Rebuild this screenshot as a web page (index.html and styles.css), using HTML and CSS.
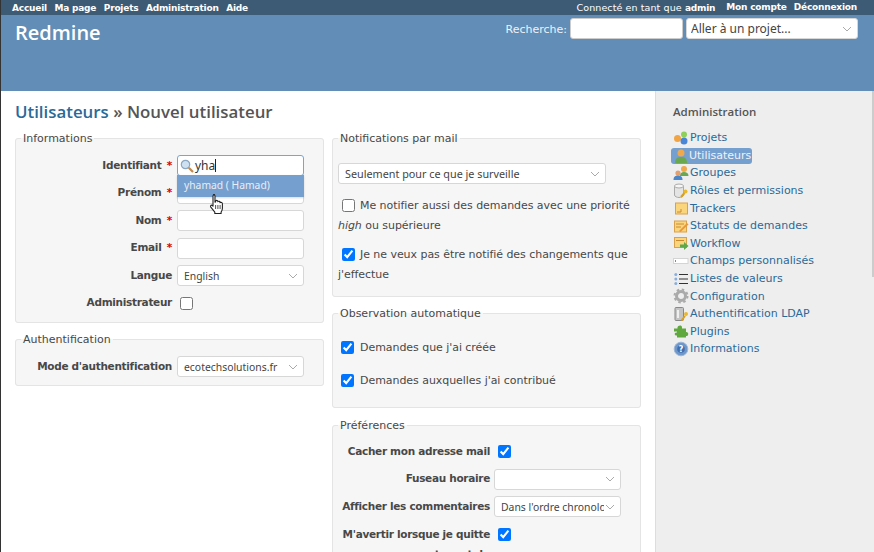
FILE: index.html
```html
<!DOCTYPE html>
<html lang="fr">
<head>
<meta charset="utf-8">
<title>Nouvel utilisateur - Redmine</title>
<link rel="stylesheet" href="styles.css">
</head>
<body>
<div class="page">
  <nav class="top-menu">
    <ul class="top-links">
      <li><a href="#">Accueil</a></li>
      <li><a href="#">Ma page</a></li>
      <li><a href="#">Projets</a></li>
      <li><a href="#">Administration</a></li>
      <li><a href="#">Aide</a></li>
    </ul>
    <div class="account">
      <span class="logged">Connecté en tant que <b>admin</b></span>
      <a href="#">Mon compte</a>
      <a href="#">Déconnexion</a>
    </div>
  </nav>
  <header class="header">
    <h1 class="brand">Redmine</h1>
    <div class="quick-search">
      <label class="search-label">Recherche:</label>
      <input class="search-input" type="text">
      <select class="field jump"><option>Aller à un projet...</option></select>
    </div>
  </header>
  <div class="body-row">
    <main class="content">
      <h2 class="title"><a href="#">Utilisateurs</a> » Nouvel utilisateur</h2>
      <div class="splitcontent">
        <div class="col">
          <fieldset class="box info-box">
            <legend>Informations</legend>
            <div class="row"><label>Identifiant <em>*</em></label>
              <div class="ac-wrap">
                <div class="ac-input">
                  <svg class="lens" viewBox="0 0 14 14" width="14" height="14"><circle cx="5.500" cy="5.500" r="4.200" fill="#cfe0f0" stroke="#8aa8c4" stroke-width="1.200"/><path d="M8.800 8.800 13 13" stroke="#c08a50" stroke-width="2.200"/></svg>
                  <span class="ac-text">yha</span><span class="caret"></span>
                </div>
                <ul class="ac-menu"><li>yhamad ( Hamad)</li></ul>
                <svg class="hand" viewBox="0 0 16 22" width="17" height="22"><path d="M5 1.600c.9 0 1.500.6 1.500 1.500v6l.6-.1V7.700c1.200-.7 2.200-.3 2.300.9.900-.6 2.100-.3 2.200 1 1-.5 2.300-.1 2.300 1.200v4.500c0 1.800-.6 2.700-1.300 3.800v1.400H6.300v-1.400c-1-1.300-2.500-3.200-4-5-.8-1.100.3-2.500 1.500-1.700l-.1.1.8.700V3.100c0-.9.600-1.500 1.500-1.500z" fill="#fff" stroke="#222" stroke-width="1.100" stroke-linejoin="round"/><path d="M7.100 12v4M9.400 12v4M11.600 12v4" stroke="#222" stroke-width=".8"/></svg>
              </div>
            </div>
            <div class="row"><label>Prénom <em>*</em></label><input class="field" type="text"></div>
            <div class="row"><label>Nom <em>*</em></label><input class="field" type="text"></div>
            <div class="row"><label>Email <em>*</em></label><input class="field" type="text"></div>
            <div class="row"><label>Langue</label><select class="field"><option>English</option></select></div>
            <div class="row"><label>Administrateur</label><input class="check" type="checkbox"></div>
          </fieldset>
          <fieldset class="box auth-box">
            <legend>Authentification</legend>
            <div class="row"><label>Mode d'authentification</label><select class="field"><option>ecotechsolutions.fr</option></select></div>
          </fieldset>
        </div>
        <div class="col">
          <fieldset class="box notif-box">
            <legend>Notifications par mail</legend>
            <select class="field notif-select"><option>Seulement pour ce que je surveille</option></select>
            <p class="para"><input class="check inline" type="checkbox">Me notifier aussi des demandes avec une priorité <i>high</i> ou supérieure</p>
            <p class="para"><input class="check inline" type="checkbox" checked>Je ne veux pas être notifié des changements que j'effectue</p>
          </fieldset>
          <fieldset class="box watch-box">
            <legend>Observation automatique</legend>
            <p class="watch"><input class="check inline" type="checkbox" checked>Demandes que j'ai créée</p>
            <p class="watch"><input class="check inline" type="checkbox" checked>Demandes auxquelles j'ai contribué</p>
          </fieldset>
          <fieldset class="box pref-box">
            <legend>Préférences</legend>
            <div class="prow"><label>Cacher mon adresse mail</label><input class="check" type="checkbox" checked></div>
            <div class="prow"><label>Fuseau horaire</label><select class="field short"><option></option></select></div>
            <div class="prow"><label>Afficher les commentaires</label><select class="field short"><option>Dans l'ordre chronologique</option></select></div>
            <div class="prow wrap"><label>M'avertir lorsque je quitte une page contenant du texte non sauvegardé</label><input class="check" type="checkbox" checked></div>
          </fieldset>
        </div>
      </div>
    </main>
    <aside class="sidebar">
      <h3 class="side-title">Administration</h3>
      <ul class="side-menu">
        <li><svg class="ico" viewBox="0 0 16 16"><circle cx="4.500" cy="8.500" r="3.500" fill="#f2a444"/><circle cx="11" cy="4.500" r="3" fill="#8fd05a"/><circle cx="11" cy="11" r="3.500" fill="#4a86d8"/></svg><a href="#">Projets</a></li>
        <li class="selected"><svg class="ico" viewBox="0 0 16 16"><circle cx="8" cy="5" r="3.500" fill="#f0a84c"/><path d="M2 15c0-5 2.500-6 6-6s6 1 6 6z" fill="#6aa84f"/></svg><a href="#">Utilisateurs</a></li>
        <li><svg class="ico" viewBox="0 0 16 16"><circle cx="11" cy="4" r="3" fill="#f0a84c"/><path d="M7 11c0-3 1.500-4 4-4s4.500 1 4.500 4z" fill="#6aa84f"/><circle cx="5" cy="8" r="2.600" fill="#e2a070"/><path d="M.5 15c0-3.500 2-4.500 4.500-4.500s4.500 1 4.500 4.500z" fill="#4a86c8"/></svg><a href="#">Groupes</a></li>
        <li><svg class="ico" viewBox="0 0 16 16"><path d="M1.500 3v9c0 1.500 2.500 2.500 4.500 2.500s4.500-1 4.500-2.500V3z" fill="#e4e4e4" stroke="#aaa"/><ellipse cx="6" cy="3" rx="4.500" ry="2" fill="#f6f6f6" stroke="#aaa"/><circle cx="12.500" cy="8.500" r="2" fill="#e8b830"/><path d="m11.500 10-3.500 4" stroke="#d8a020" stroke-width="2"/></svg><a href="#">Rôles et permissions</a></li>
        <li><svg class="ico" viewBox="0 0 16 16"><rect x="2.500" y="3" width="12" height="11" fill="#fbd57c" stroke="#d9a24a"/><path d="M4 12h4V9" stroke="#c98a30" fill="none"/></svg><a href="#">Trackers</a></li>
        <li><svg class="ico" viewBox="0 0 16 16"><rect x="1.500" y="3" width="12" height="11" fill="#fbd57c" stroke="#d9a24a"/><path d="M3 6h8M3 9h5" stroke="#c98a30"/><path d="m6 13 8-8 1.500 1.500-8 7.500z" fill="#e8983a"/></svg><a href="#">Statuts de demandes</a></li>
        <li><svg class="ico" viewBox="0 0 16 16"><rect x="1.500" y="2.500" width="12" height="10" fill="#fbd57c" stroke="#d9a24a"/><path d="M3 5.500h8" stroke="#c98a30"/><path d="M7 9.500h4V7l4.500 4-4.500 4v-2.500H7z" fill="#5da84a"/></svg><a href="#">Workflow</a></li>
        <li><svg class="ico" viewBox="0 0 16 16"><rect x=".5" y="5.500" width="14.500" height="5" fill="#fff" stroke="#d4d4d4"/><path d="M2.500 7v2" stroke="#888"/></svg><a href="#">Champs personnalisés</a></li>
        <li><svg class="ico" viewBox="0 0 16 16"><path d="M6 3.500h9M6 8h9M6 12.500h9" stroke="#333" stroke-width="1.200"/><circle cx="2.800" cy="3.500" r="1.500" fill="#88aee0"/><circle cx="2.800" cy="8" r="1.500" fill="#88aee0"/><circle cx="2.800" cy="12.500" r="1.500" fill="#88aee0"/></svg><a href="#">Listes de valeurs</a></li>
        <li><svg class="ico" viewBox="0 0 16 16"><circle cx="8" cy="8" r="4.500" fill="none" stroke="#aaa" stroke-width="3"/><circle cx="8" cy="8" r="6.500" fill="none" stroke="#aaa" stroke-width="2" stroke-dasharray="2.500 2.600"/></svg><a href="#">Configuration</a></li>
        <li><svg class="ico" viewBox="0 0 16 16"><rect x="2" y="1.500" width="8.500" height="13" rx="1" fill="#c4c4c4" stroke="#888"/><rect x="4" y="4" width="2" height="8" fill="#efefef"/><circle cx="13" cy="8" r="2" fill="#e8b830"/><path d="m12 10-3.500 4.500" stroke="#d8a020" stroke-width="2"/></svg><a href="#">Authentification LDAP</a></li>
        <li><svg class="ico" viewBox="0 0 16 16"><path d="M1 5.500h3.500c-.8-3 4.500-4.500 4.500-1v1h4v3.500c3-.5 3 4.500 0 4v1.500H4v-2C1 13 1 9 4 9.500v-1H1z" fill="#5fa83e"/></svg><a href="#">Plugins</a></li>
        <li><svg class="ico" viewBox="0 0 16 16"><circle cx="8" cy="8" r="6.800" fill="#6f97c9" stroke="#9bb6d8"/><circle cx="8" cy="8" r="3.800" fill="#3f6fb0"/><text class="info-mark" x="8" y="11" text-anchor="middle">?</text></svg><a href="#">Informations</a></li>
      </ul>
      <div class="scroll-thumb"></div>
    </aside>
  </div>
</div>
</body>
</html>
```
FILE: styles.css
```css
* { box-sizing: border-box; }
html, body { margin: 0; padding: 0; height: 100%; overflow: hidden; }
body { font-family: "DejaVu Sans", Verdana, sans-serif; font-size: 11px; color: #484848; background: #fff; border-left: 1px solid #333; }
.page { display: flex; flex-direction: column; height: 552px; }
ul { list-style: none; margin: 0; padding: 0; }
a { color: #169; text-decoration: none; }

.top-menu { flex: none; height: 15px; background: #3e5b76; color: #fff; display: flex; justify-content: space-between; align-items: center; font-size: 9.500px; padding: 0 17px 0 11px; }
.logged { margin-right: 4px; letter-spacing: .1px; }
.top-menu a, .top-menu b { color: #fff; font-weight: bold; font-size: 9px; letter-spacing: -.2px; }
.top-links { display: flex; gap: 7.500px; }
.account { display: flex; gap: 7px; }

.header { flex: none; height: 76px; background: #628db6; color: #f8f8f8; display: flex; justify-content: space-between; padding: 3px 16px 0 14px; }
.brand { margin: 1px 0 0; font: 600 20px/28px "Open Sans", sans-serif; color: #fff; }
.quick-search { display: flex; align-items: flex-start; height: 22px; }
.search-label { line-height: 23px; font-size: 11px; margin-right: 3px; color: #eef2f7; }
.search-input { width: 113px; height: 21px; border: 1px solid #ccc; border-radius: 3px; background: #fff; margin-right: 3px; }

.field { width: 127px; height: 21px; border: 1px solid #d7d7d7; border-radius: 3px; background: #fff; font: 10.400px "Noto Sans", sans-serif; color: #444; padding: 0 6px; margin: 0; }
select.field { appearance: none; -webkit-appearance: none; padding-right: 16px; background: #fff url("data:image/svg+xml,%3Csvg xmlns='http://www.w3.org/2000/svg' width='10' height='6'%3E%3Cpath d='M1 1l4 4 4-4' fill='none' stroke='%23aaa'/%3E%3C/svg%3E") no-repeat right 5px center; }
.jump { width: 172px; height: 21px; font-size: 12px !important; padding-left: 4px !important; }

.body-row { flex: 1; display: flex; min-height: 0; overflow: hidden; }
.content { width: 654px; flex: none; padding: 0 14px; }
.title { margin: 9px 0 7px; font: 600 16.850px/24px "Open Sans", sans-serif; color: #555; }
.title a { color: #2a6a98; }
.splitcontent { display: flex; gap: 8px; align-items: flex-start; }
.col { width: 309px; flex: none; }

.box { margin: 0 0 9px; padding: 0 8px; border: 1px solid #e4e4e4; border-radius: 3px; background: #f6f6f6; min-width: 0; }
.box legend { padding: 1px 2px 0; margin-left: -3px; font-size: 11px; line-height: 14px; color: #484848; }
.info-box { height: 192px; padding-top: 9px; }
.auth-box { height: 54px; padding-top: 9px; }
.notif-box { height: 166px; padding: 17px 5px 0; }
.notif-box legend { margin-left: 0; }
.watch-box { height: 102px; padding: 0 8px; margin-bottom: 10px; }
.pref-box { height: 200px; padding-top: 8px; }

.row, .prow { display: flex; align-items: center; height: 21px; margin-bottom: 6.600px; }
.row label, .prow label { text-align: right; font-weight: bold; flex: none; font-size: 10.500px; letter-spacing: -.3px; padding-bottom: 2px; }
.row label { width: 148px; margin-right: 5px; }
.row label em { color: #d00; font-style: normal; margin-left: 2px; }
.check { width: 13px; height: 13px; margin: 0; flex: none; }
.row .check { margin-left: 3px; }

.ac-wrap { position: relative; width: 127px; height: 21px; }
.ac-input { height: 21px; border: 1px solid #7aa5d0; border-radius: 3px; background: #fff; display: flex; align-items: center; padding-left: 2px; font: 12px "Noto Sans", sans-serif; color: #333; }
.lens { margin-right: 1px; }
.caret { width: 1px; height: 13px; background: #222; }
.ac-menu { position: absolute; top: 20px; left: 0; width: 127px; background: #759fcf; color: #e8eef6; height: 22px; padding-left: 7px; font: 10.300px/21px "Noto Sans", sans-serif; box-shadow: 0 1px 2px rgba(0,0,0,.15); z-index: 2; }
.hand { position: absolute; top: 38px; left: 31px; z-index: 3; }

.notif-select { width: 268px; display: block; font-size: 10.800px; }
.para { margin: 10px 0 0; line-height: 19.500px; letter-spacing: -.05px; }
.notif-select + .para { margin-top: 12px; }
.check.inline { margin: 0 5px 0 4px; vertical-align: -3px; }
.watch { margin: 0; line-height: 20px; letter-spacing: -.05px; }
.watch-box .check.inline { margin-left: 0; margin-right: 6px; }
.watch:first-of-type { margin-top: 17px; }
.watch + .watch { margin-top: 13px; }

.prow label { width: 153px; margin-left: -4px; margin-right: 4px; }
.prow .check { margin-left: 4px; }
.prow.wrap { align-items: flex-start; height: auto; }
.prow.wrap label { line-height: 20px; margin-top: 0; }
.prow.wrap .check { margin-top: 4px; }
.field.short { width: 127px; }

.sidebar { flex: 1; position: relative; background: #eee; border-left: 1px solid #ddd; padding: 13px 0 0 17px; }
.side-title { margin: 0 0 9px; font: 600 11.500px/16px "Open Sans", sans-serif; color: #555; }
.side-menu li { display: flex; align-items: center; height: 17.600px; }
.side-menu a { color: #2a6a98; font-size: 11px; padding-left: 1px; }
.ico { width: 16px; height: 16px; flex: none; }
.selected { width: 81px; height: 16px !important; background: #759fcf; border-radius: 3px; margin: 1px 0 .600px -2px; padding-left: 2px; }
.selected a { color: #eef3f9 !important; margin-left: -1px; }
.info-mark { font-size: 8px; font-weight: bold; fill: #fff; }
.scroll-thumb { position: absolute; top: 0; right: 0; width: 2px; height: 186px; background: #ccc; }
```
